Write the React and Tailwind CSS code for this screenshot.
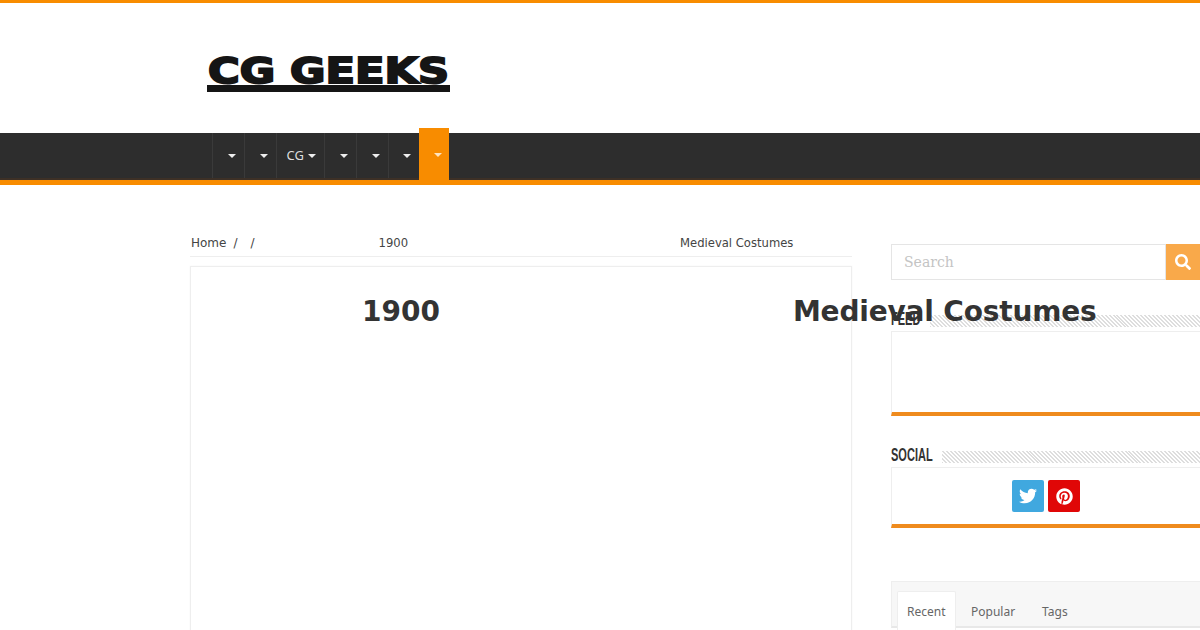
import { FaSearch, FaTwitter, FaPinterest } from 'react-icons/fa';

const NAV_ITEMS = [
  { label: '', width: 'w-[32px]' },
  { label: '', width: 'w-[32px]' },
  { label: 'CG', width: 'w-[48px]' },
  { label: '', width: 'w-[32px]' },
  { label: '', width: 'w-[32px]' },
  { label: '', width: 'w-[31px]' },
];

const HATCH = 'bg-[repeating-linear-gradient(45deg,#dedede_0px,#dedede_1.4px,#ffffff_1.4px,#ffffff_2.8px)]';

function Caret({ className }) {
  return <span className={`inline-block w-0 h-0 border-x-[4px] border-x-transparent border-t-[4px] ${className}`}></span>;
}

function WidgetTitle({ title, width }) {
  return (
    <div className="flex items-start h-[20px]">
      <div className={`${width} shrink-0`}>
        <h4 className="origin-left scale-x-[0.58] whitespace-nowrap font-['Liberation_Sans',sans-serif] font-bold text-[19px] leading-[16px] text-[#333]">{title}</h4>
      </div>
      <div className={`flex-1 h-[12px] mt-[4px] ${HATCH}`}></div>
    </div>
  );
}

export default function App() {
  return (
    <div className="w-[1200px] h-[630px] overflow-hidden bg-white border-t-[3px] border-[#f88c00] font-['Noto_Sans',sans-serif]">
      <header className="h-[130px] pl-[207px] pt-[52px]">
        <svg width="243" height="37" viewBox="0 0 243 37" className="block overflow-visible">
          <text x="1" y="28" textLength="241" lengthAdjust="spacingAndGlyphs" fontFamily="DejaVu Sans" fontWeight="700" fontSize="36" fill="#151515" stroke="#151515" strokeWidth="2" strokeLinejoin="miter">CG GEEKS</text>
          <rect x="0" y="30" width="243" height="7" fill="#151515" />
        </svg>
      </header>

      <nav className="h-[52px] bg-[#2d2d2d] border-b-[5px] border-[#f88c00] pl-[212px] flex relative">
        <div className="absolute left-0 right-0 bottom-0 h-[2px] bg-[#3d3026]"></div>
        {NAV_ITEMS.map((item, i) => (
          <div key={i} className={`${item.width} h-[45px] border-l border-[#3a3a3a] flex items-center justify-end gap-[4px] pr-[8px] pt-[1px] text-[13px] text-[#ddd]`}>
            {item.label && <span>{item.label}</span>}
            <Caret className="border-t-[#eee]" />
          </div>
        ))}
        <div className="w-[30px] h-[57px] -mt-[5px] bg-[#f88c00] flex items-center justify-end pr-[7px] pb-[4px] relative">
          <Caret className="border-t-[#fde3c0]" />
        </div>
      </nav>

      <div className="flex pl-[190px] pt-[47px]">
        <main className="w-[662px] shrink-0 relative z-10">
          <div className="h-[25px] border-b border-[#eee] flex items-start pt-[1px] pl-[1px] font-['DejaVu_Sans',sans-serif] text-[12px] leading-[20px] text-[#444] whitespace-nowrap">
            <span>Home</span>
            <span className="ml-[7px]">/</span>
            <span className="ml-[13px]">/</span>
            <span className="ml-[124px] text-[11.6px]">1900</span>
            <span className="ml-[272px] text-[11.6px]">Medieval Costumes</span>
          </div>
          <div className="mt-[9px] h-[400px] border border-[#eee] shadow-[0_0_2px_rgba(0,0,0,0.04)] pt-[27px] pl-[171px] whitespace-nowrap font-['DejaVu_Sans',sans-serif] font-bold text-[28px] leading-[36px] text-[#333]">
            <span>1900</span>
            <span className="ml-[353px] tracking-[-0.18px]">Medieval Costumes</span>
          </div>
        </main>

        <aside className="w-[309px] shrink-0 ml-[39px] pt-[12px]">
          <div className="flex h-[36px]">
            <div className="flex-1 border border-[#e5e5e5] pl-[12px] flex items-center font-['DejaVu_Serif',serif] text-[14px] text-[#c4c4c4]">Search</div>
            <button type="button" className="w-[34px] bg-[#f9a94a] flex items-center justify-center text-white text-[16px]">
              <FaSearch />
            </button>
          </div>

          <div className="mt-[31px]">
            <WidgetTitle title="FEED" width="w-[39px]" />
            <div className="h-[85px] border-t border-l border-[#eee] border-b-4 border-b-[#ef8b1d]"></div>
          </div>

          <div className="mt-[31px]">
            <WidgetTitle title="SOCIAL" width="w-[51px]" />
            <div className="h-[61px] border-t border-l border-[#eee] border-b-4 border-b-[#ef8b1d] flex justify-center gap-[4px] pt-[12px]">
              <a className="w-[32px] h-[32px] rounded-[2px] bg-[#40a8df] flex items-center justify-center text-white text-[18px]"><FaTwitter /></a>
              <a className="w-[32px] h-[32px] rounded-[2px] bg-[#e00707] flex items-center justify-center text-white text-[17px]"><FaPinterest /></a>
            </div>
          </div>

          <div className="mt-[53px] h-[47px] bg-[#f7f7f7] border-t border-l border-b-2 border-[#eee] border-b-[#e8e8e8] pt-[9px] pl-[5px] flex items-start text-[12px] text-[#666]">
            <div className="w-[59px] h-[40px] shrink-0 bg-white border border-[#eee] border-b-0 rounded-t-[2px] pl-[9px] leading-[40px]">Recent</div>
            <div className="ml-[15px] leading-[42px]">Popular</div>
            <div className="ml-[27px] leading-[42px]">Tags</div>
          </div>
        </aside>
      </div>
    </div>
  );
}
